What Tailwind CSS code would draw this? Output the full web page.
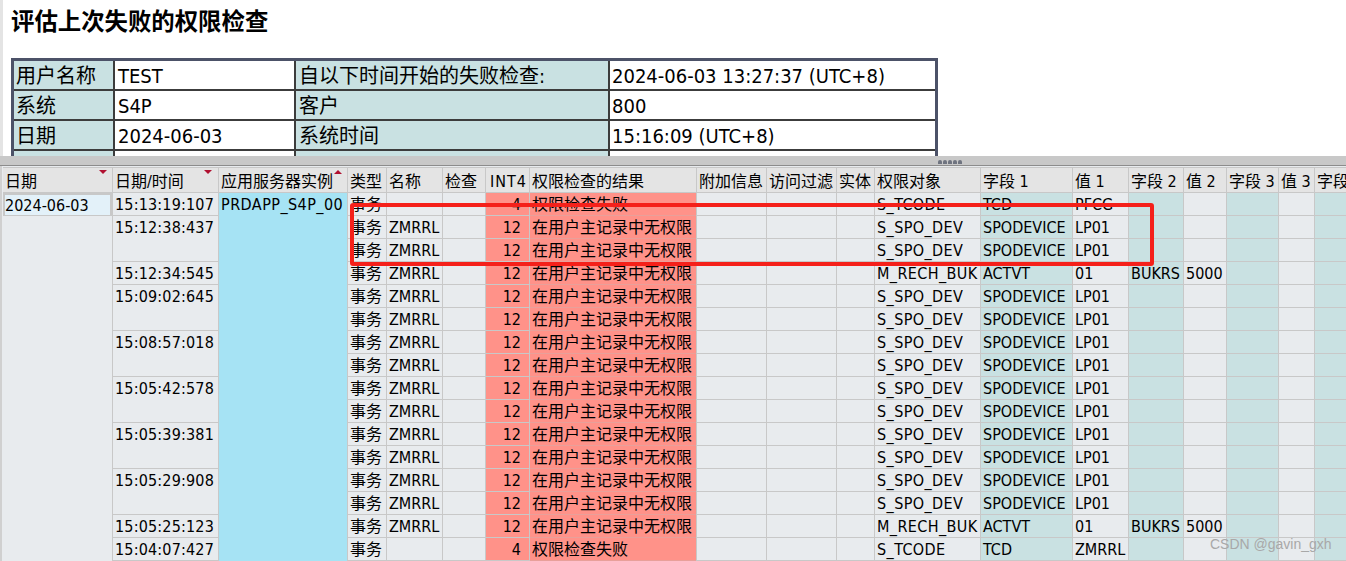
<!DOCTYPE html>
<html lang="zh">
<head>
<meta charset="utf-8">
<script src="https://cdn.jsdelivr.net/npm/@tailwindcss/browser@4"></script>
</head>
<body class="relative w-[1346px] h-[561px] overflow-hidden bg-white text-[16px] leading-[22px] text-black font-['DejaVu_Sans_Condensed','Noto_Sans_CJK_SC',sans-serif]">

<div class="h-[156px] overflow-hidden border-l-[3px] border-[#e4e4e4] pl-[8px]">
  <h1 class="h-[58px] pt-[4px] text-[23.4px] leading-[32px] font-bold font-['Noto_Sans_CJK_SC',sans-serif]">评估上次失败的权限检查</h1>
  <div class="w-[927px] border-[3px] border-b-0 border-[#4c5268] grid grid-cols-[101px_181px_314px_1fr] [&>div]:h-[30px] [&>div]:border-b-2 [&>div]:border-[#3c3c3c] [&>div]:pl-[3px] [&>div]:leading-[31px] text-[20px]">
    <div class="bg-[#c9e1e2] border-r-2 pl-[2px]!">用户名称</div><div class="border-r-2">TEST</div><div class="bg-[#c9e1e2] border-r-2">自以下时间开始的失败检查:</div><div class="pl-[2px]!">2024-06-03 13:27:37 (UTC+8)</div>
    <div class="bg-[#c9e1e2] border-r-2 pl-[2px]!">系统</div><div class="border-r-2">S4P</div><div class="bg-[#c9e1e2] border-r-2">客户</div><div class="pl-[2px]!">800</div>
    <div class="bg-[#c9e1e2] border-r-2 pl-[2px]!">日期</div><div class="border-r-2">2024-06-03</div><div class="bg-[#c9e1e2] border-r-2">系统时间</div><div class="pl-[2px]!">15:16:09 (UTC+8)</div>
    <div class="bg-[#c9e1e2] border-r-2"></div><div class="border-r-2"></div><div class="bg-[#c9e1e2] border-r-2"></div><div></div>
  </div>
</div>

<div class="relative h-[10px] bg-[#c8c8c8] border-b border-[#8c8c8c]">
  <div class="absolute left-[938px] top-[4px] flex gap-[1px]">
    <span class="w-[4px] h-[4px] rounded-t-[2px] bg-[#6f7480]"></span><span class="w-[4px] h-[4px] rounded-t-[2px] bg-[#6f7480]"></span><span class="w-[4px] h-[4px] rounded-t-[2px] bg-[#6f7480]"></span><span class="w-[4px] h-[4px] rounded-t-[2px] bg-[#6f7480]"></span><span class="w-[4px] h-[4px] rounded-t-[2px] bg-[#6f7480]"></span>
  </div>
</div>

<div class="flex h-[395px] bg-[#e8ebee] border-l-2 border-[#d0d0d0] pl-[1px] pt-[1px] overflow-hidden [&>div]:shrink-0 [&>div]:border-r [&>div]:border-[#c8c8c8] [&_p]:h-[23px] [&_p]:border-b [&_p]:border-[#c8c8c8] [&_p]:pl-[2px] [&_p]:pt-[1px] [&_p]:whitespace-nowrap [&_p]:overflow-hidden [&_p:first-child]:h-[26px] [&_p:first-child]:bg-[#e4e4e4] [&_p:first-child]:border-t [&_p:first-child]:pt-[3px]">

  <div class="w-[110px] relative">
    <p>日期</p>
    <p class="bg-[#e3f1f9] border-2 border-[#d4dde3] pl-0! pt-0!">2024-06-03</p>
    <span class="absolute left-[96px] top-[3px] w-0 h-0 border-x-[4px] border-x-transparent border-t-[4px] border-t-[#b01030]"></span>
  </div>

  <div class="w-[106px] relative [&_p:not(:first-child)]:tracking-[0.17px]">
    <p>日期/时间</p>
    <p>15:13:19:107</p>
    <p class="h-[46px]!">15:12:38:437</p>
    <p>15:12:34:545</p>
    <p class="h-[46px]!">15:09:02:645</p>
    <p class="h-[46px]!">15:08:57:018</p>
    <p class="h-[46px]!">15:05:42:578</p>
    <p class="h-[46px]!">15:05:39:381</p>
    <p class="h-[46px]!">15:05:29:908</p>
    <p>15:05:25:123</p>
    <p>15:04:07:427</p>
    <span class="absolute left-[91px] top-[3px] w-0 h-0 border-x-[4px] border-x-transparent border-t-[4px] border-t-[#b01030]"></span>
  </div>

  <div class="w-[129px] relative bg-[#a6e3f4]">
    <p>应用服务器实例</p>
    <p class="border-b-0! tracking-[0.45px]">PRDAPP_S4P_00</p>
    <span class="absolute left-[115px] top-[3px] w-0 h-0 border-x-[4px] border-x-transparent border-b-[4px] border-b-[#b01030]"></span>
  </div>

  <div class="w-[39px]">
    <p>类型</p><p>事务</p><p>事务</p><p>事务</p><p>事务</p><p>事务</p><p>事务</p><p>事务</p><p>事务</p><p>事务</p><p>事务</p><p>事务</p><p>事务</p><p>事务</p><p>事务</p><p>事务</p><p>事务</p>
  </div>

  <div class="w-[56px]">
    <p>名称</p><p></p><p>ZMRRL</p><p>ZMRRL</p><p>ZMRRL</p><p>ZMRRL</p><p>ZMRRL</p><p>ZMRRL</p><p>ZMRRL</p><p>ZMRRL</p><p>ZMRRL</p><p>ZMRRL</p><p>ZMRRL</p><p>ZMRRL</p><p>ZMRRL</p><p>ZMRRL</p><p></p>
  </div>

  <div class="w-[43px]">
    <p>检查</p><p></p><p></p><p></p><p></p><p></p><p></p><p></p><p></p><p></p><p></p><p></p><p></p><p></p><p></p><p></p><p></p>
  </div>

  <div class="w-[44px] bg-[#ff9289] text-right [&_p]:pr-[8px]">
    <p class="pr-[2px]! bg-[#e4e4e4] tracking-[1px]">INT4</p><p>4</p><p>12</p><p>12</p><p>12</p><p>12</p><p>12</p><p>12</p><p>12</p><p>12</p><p>12</p><p>12</p><p>12</p><p>12</p><p>12</p><p>12</p><p>4</p>
  </div>

  <div class="w-[167px] bg-[#ff9289] [&_p]:border-[#e8a09a]">
    <p class="border-[#c8c8c8]!">权限检查的结果</p><p>权限检查失败</p><p>在用户主记录中无权限</p><p>在用户主记录中无权限</p><p>在用户主记录中无权限</p><p>在用户主记录中无权限</p><p>在用户主记录中无权限</p><p>在用户主记录中无权限</p><p>在用户主记录中无权限</p><p>在用户主记录中无权限</p><p>在用户主记录中无权限</p><p>在用户主记录中无权限</p><p>在用户主记录中无权限</p><p>在用户主记录中无权限</p><p>在用户主记录中无权限</p><p>在用户主记录中无权限</p><p>权限检查失败</p>
  </div>

  <div class="w-[70px]">
    <p>附加信息</p><p></p><p></p><p></p><p></p><p></p><p></p><p></p><p></p><p></p><p></p><p></p><p></p><p></p><p></p><p></p><p></p>
  </div>

  <div class="w-[70px]">
    <p>访问过滤</p><p></p><p></p><p></p><p></p><p></p><p></p><p></p><p></p><p></p><p></p><p></p><p></p><p></p><p></p><p></p><p></p>
  </div>

  <div class="w-[38px]">
    <p>实体</p><p></p><p></p><p></p><p></p><p></p><p></p><p></p><p></p><p></p><p></p><p></p><p></p><p></p><p></p><p></p><p></p>
  </div>

  <div class="w-[106px] [&_p:not(:first-child)]:tracking-[0.4px]">
    <p>权限对象</p><p>S_TCODE</p><p>S_SPO_DEV</p><p>S_SPO_DEV</p><p>M_RECH_BUK</p><p>S_SPO_DEV</p><p>S_SPO_DEV</p><p>S_SPO_DEV</p><p>S_SPO_DEV</p><p>S_SPO_DEV</p><p>S_SPO_DEV</p><p>S_SPO_DEV</p><p>S_SPO_DEV</p><p>S_SPO_DEV</p><p>S_SPO_DEV</p><p>M_RECH_BUK</p><p>S_TCODE</p>
  </div>

  <div class="w-[92px] bg-[#c9e1e2]">
    <p>字段 1</p><p>TCD</p><p>SPODEVICE</p><p>SPODEVICE</p><p>ACTVT</p><p>SPODEVICE</p><p>SPODEVICE</p><p>SPODEVICE</p><p>SPODEVICE</p><p>SPODEVICE</p><p>SPODEVICE</p><p>SPODEVICE</p><p>SPODEVICE</p><p>SPODEVICE</p><p>SPODEVICE</p><p>ACTVT</p><p>TCD</p>
  </div>

  <div class="w-[56px]">
    <p>值 1</p><p>PFCG</p><p>LP01</p><p>LP01</p><p>01</p><p>LP01</p><p>LP01</p><p>LP01</p><p>LP01</p><p>LP01</p><p>LP01</p><p>LP01</p><p>LP01</p><p>LP01</p><p>LP01</p><p>01</p><p>ZMRRL</p>
  </div>

  <div class="w-[55px] bg-[#c9e1e2]">
    <p>字段 2</p><p></p><p></p><p></p><p>BUKRS</p><p></p><p></p><p></p><p></p><p></p><p></p><p></p><p></p><p></p><p></p><p>BUKRS</p><p></p>
  </div>

  <div class="w-[43px]">
    <p>值 2</p><p></p><p></p><p></p><p>5000</p><p></p><p></p><p></p><p></p><p></p><p></p><p></p><p></p><p></p><p></p><p>5000</p><p></p>
  </div>

  <div class="w-[52px] bg-[#c9e1e2]">
    <p>字段 3</p><p></p><p></p><p></p><p></p><p></p><p></p><p></p><p></p><p></p><p></p><p></p><p></p><p></p><p></p><p></p><p></p>
  </div>

  <div class="w-[36px]">
    <p>值 3</p><p></p><p></p><p></p><p></p><p></p><p></p><p></p><p></p><p></p><p></p><p></p><p></p><p></p><p></p><p></p><p></p>
  </div>

  <div class="w-[52px] bg-[#c9e1e2]">
    <p>字段 4</p><p></p><p></p><p></p><p></p><p></p><p></p><p></p><p></p><p></p><p></p><p></p><p></p><p></p><p></p><p></p><p></p>
  </div>
</div>

<div class="absolute left-[350px] top-[203px] w-[804px] h-[63px] border-[4px] border-[#f5201a] rounded-[3px]"></div>
<div class="absolute left-[1210px] top-[534px] text-[14px] leading-[20px] text-[#a8a8a8] font-['Liberation_Sans',sans-serif]">CSDN @gavin_gxh</div>
</body>
</html>
